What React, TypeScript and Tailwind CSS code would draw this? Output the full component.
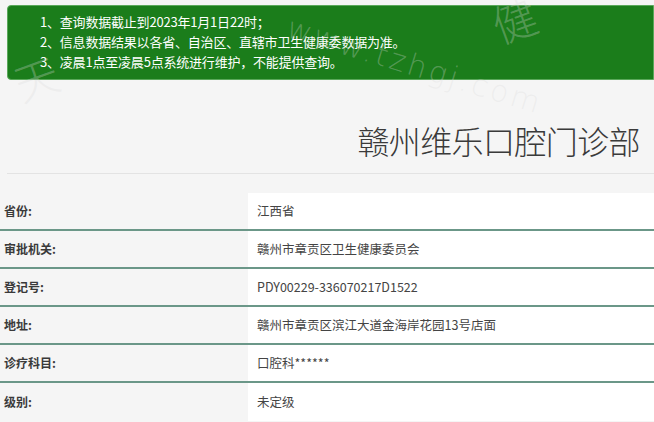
const rows: [string, string][] = [
  ["省份:", "江西省"],
  ["审批机关:", "赣州市章贡区卫生健康委员会"],
  ["登记号:", "PDY00229-336070217D1522"],
  ["地址:", "赣州市章贡区滨江大道金海岸花园13号店面"],
  ["诊疗科目:", "口腔科******"],
  ["级别:", "未定级"],
];

const App = () => {
  return (
    <div
      className="relative w-[654px] h-[422px] overflow-hidden bg-[#f5f5f5] text-[#333]"
      style={{ fontFamily: '"Noto Sans CJK SC", "Noto Sans", sans-serif' }}
    >
      <div className="pt-[5px] pl-[7px]">
        <div className="h-[75px] rounded-l-[4px] border border-[#5aa85a] bg-[#1b7d1b] pl-[32px] pt-[6px] text-[13px] leading-[20px] text-white tracking-[-0.2px]">
          <p>1、查询数据截止到2023年1月1日22时；</p>
          <p>2、信息数据结果以各省、自治区、直辖市卫生健康委数据为准。</p>
          <p>3、凌晨1点至凌晨5点系统进行维护，不能提供查询。</p>
        </div>
      </div>

      <div className="ml-[7px] h-[94px] border-b border-[#e3e3e3] flex items-center justify-end pr-[14px] pt-[26px]">
        <h1 className="text-[32px] font-light leading-none text-[#3a3a3a] tracking-[-0.6px]">赣州维乐口腔门诊部</h1>
      </div>

      <div className="mt-[19px]">
        {rows.map(([label, value], i) => (
          <div
            key={label}
            className={`flex h-[38px] ${i < rows.length - 1 ? "border-b-2 border-[#6b9788]" : ""}`}
          >
            <div className="w-[248px] flex items-center pl-[4px] text-[12px] font-bold text-[#3a3a3a]">{label}</div>
            <div className="flex-1 bg-white flex items-center pl-[9px] text-[12.5px] text-[#444]">{value}</div>
          </div>
        ))}
      </div>

      {/* watermark */}
      <div
        className="pointer-events-none absolute left-[288px] top-[4px] rotate-[17deg] origin-left text-[30px] tracking-[3px] text-[#dcdcdc]/30 font-extralight"
        style={{ fontFamily: '"DejaVu Sans", sans-serif' }}
      >
        www.tzhgj.com
      </div>
      <div className="pointer-events-none absolute left-[492px] top-[-14px] rotate-[-20deg] text-[44px] text-[#dcdcdc]/30 font-extralight">
        健
      </div>
      <div className="pointer-events-none absolute left-[14px] top-[44px] rotate-[-20deg] text-[44px] text-[#dcdcdc]/30 font-extralight">
        天
      </div>
    </div>
  );
};

export default App;
